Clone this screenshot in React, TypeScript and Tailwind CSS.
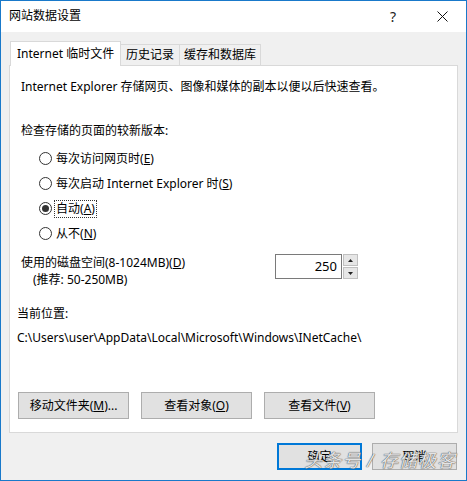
import React from "react";

const font = "font-['Segoe_UI','Noto_Sans','Noto_Sans_CJK_SC',sans-serif]";

const Radio = ({ label, k, checked, focus }: { label: string; k: string; checked?: boolean; focus?: boolean }) => {
	return (
		<div className="h-[25px] flex items-center pl-[29px]">
			<span className="w-[13px] h-[13px] rounded-full border border-[#333] bg-white flex items-center justify-center">
				{checked && <span className="w-[7px] h-[7px] rounded-full bg-[#333]" />}
			</span>
			<span className={`ml-[3px] px-[1px] leading-[16px] ${focus ? "outline outline-1 outline-dotted outline-[#333]" : ""}`}>
				{label}(<span className="underline">{k}</span>)
			</span>
		</div>
	);
};

const Btn = ({ children, w = "w-[111px]", primary }: { children: React.ReactNode; w?: string; primary?: boolean }) => {
	return (
		<div
			className={`${w} h-[27px] flex items-center justify-center bg-[#e1e1e1] ${
				primary ? "border-2 border-[#0078d7]" : "border border-[#adadad]"
			}`}
		>
			{children}
		</div>
	);
};

export default function App() {
	return (
		<div className={`w-[467px] h-[481px] relative flex flex-col border border-[#1979ca] text-[12px] text-black ${font}`}>
			{/* title bar */}
			<header className="h-[31px] bg-white flex items-center shrink-0">
				<span className="ml-[8px] mt-[-1px]">网站数据设置</span>
				<span className="ml-auto mr-[41px] text-[14px] text-[#222]">?</span>
				<svg className="mr-[18px]" width="11" height="11" viewBox="0 0 11 11">
					<path d="M0.5 0.5 L10.5 10.5 M10.5 0.5 L0.5 10.5" stroke="#111" strokeWidth="1" />
				</svg>
			</header>
			{/* body */}
			<main className="flex-1 bg-[#f0f0f0] flex flex-col px-[8px]">
				{/* tabs */}
				<div className="flex items-end h-[32px] pl-[1px] mt-[1px]">
					<div className="h-[25px] w-[111px] bg-white border border-b-0 border-[#d9d9d9] flex items-center pl-[6px] relative z-10 translate-y-[1px]">
						Internet 临时文件
					</div>
					<div className="h-[21px] w-[59px] bg-[#f0f0f0] border border-l-0 border-b-0 border-[#d9d9d9] flex items-center justify-center">
						历史记录
					</div>
					<div className="h-[21px] w-[81px] bg-[#f0f0f0] border border-l-0 border-b-0 border-[#d9d9d9] flex items-center justify-center">
						缓存和数据库
					</div>
				</div>
				{/* panel */}
				<section className="h-[368px] bg-white border border-[#d9d9d9] flex flex-col">
					<p className="mt-[13px] ml-[11px] leading-[16px]">
						Internet Explorer 存储网页、图像和媒体的副本以便以后快速查看。
					</p>
					<p className="mt-[28px] ml-[11px] leading-[16px]">检查存储的页面的较新版本:</p>
					<div className="mt-[7px] flex flex-col">
						<Radio label="每次访问网页时" k="E" />
						<Radio label="每次启动 Internet Explorer 时" k="S" />
						<Radio label="自动" k="A" checked focus />
						<Radio label="从不" k="N" />
					</div>
					<div className="mt-[8px] flex">
						<div className="flex flex-col ml-[11px] w-[254px]">
							<span className="leading-[17px]">
								使用的磁盘空间(8-1024MB)(<span className="underline">D</span>)
							</span>
							<span className="leading-[17px] ml-[12px]">(推荐: 50-250MB)</span>
						</div>
						<div className="flex h-[25px]">
							<div className="w-[67px] h-[25px] border border-[#7a7a7a] flex items-center justify-end pr-[4px] text-[13px]">
								250
							</div>
							<div className="flex flex-col w-[15px] h-[25px] ml-[1px] gap-[1px]">
								<div className="flex-1 bg-[#e6e6e6] border border-[#c0c0c0] flex items-center justify-center">
									<svg width="5" height="3" viewBox="0 0 5 3"><path d="M0 3 L2.5 0 L5 3 Z" fill="#222" /></svg>
								</div>
								<div className="flex-1 bg-[#e6e6e6] border border-[#c0c0c0] flex items-center justify-center">
									<svg width="5" height="3" viewBox="0 0 5 3"><path d="M0 0 L2.5 3 L5 0 Z" fill="#222" /></svg>
								</div>
							</div>
						</div>
					</div>
					<p className="mt-[18px] ml-[7px] leading-[16px]">当前位置:</p>
					<p className="mt-[8px] ml-[7px] leading-[16px]">C:\Users\user\AppData\Local\Microsoft\Windows\INetCache\</p>
					<div className="mt-auto mb-[13px] ml-[8px] flex gap-[12px]">
						<Btn>
							移动文件夹(<span className="underline">M</span>)...
						</Btn>
						<Btn>
							查看对象(<span className="underline">O</span>)
						</Btn>
						<Btn>
							查看文件(<span className="underline">V</span>)
						</Btn>
					</div>
				</section>
				{/* footer buttons */}
				<div className="flex justify-end gap-[10px] mt-[10px] pr-[1px]">
					<Btn w="w-[85px]" primary>
						确定
					</Btn>
					<Btn w="w-[85px]">取消</Btn>
				</div>
			</main>
			{/* watermark */}
			<span className="absolute right-[10px] bottom-[6px] text-[18px] italic text-white/85 [text-shadow:0_0_1px_#444,0_0_1px_#444] tracking-[1px]">
				头条号 / 存储极客
			</span>
		</div>
	);
}
